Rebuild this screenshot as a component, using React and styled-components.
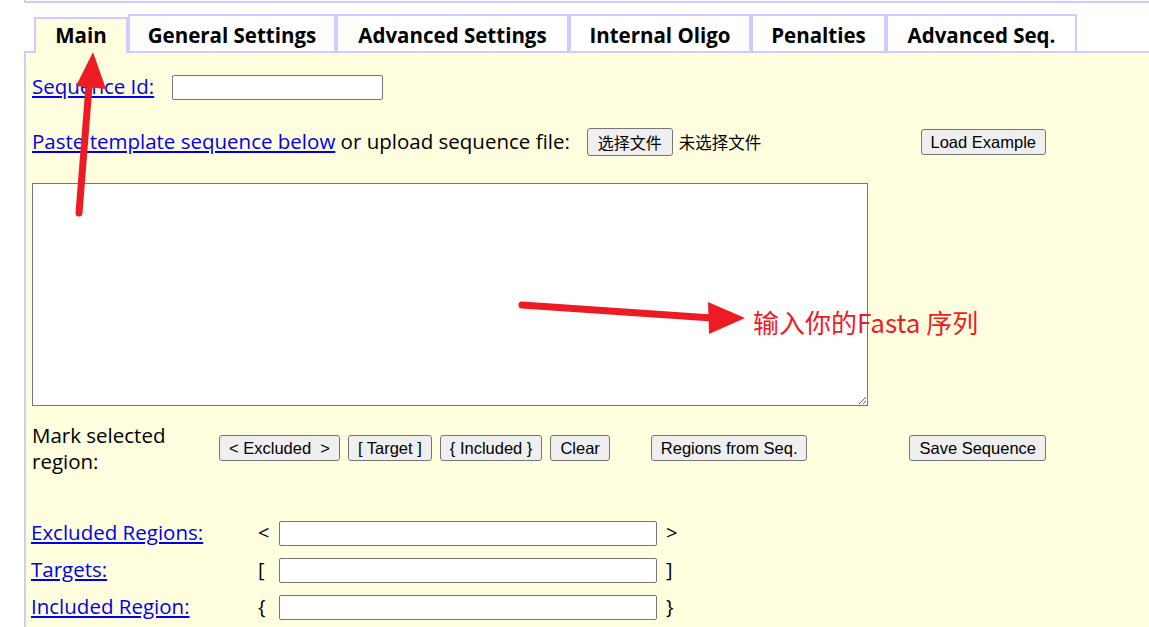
import styled, { createGlobalStyle } from "styled-components"

const GlobalStyle = createGlobalStyle`
    body {
        margin: 0;
        background: #ffffff;
        font-family: "Open Sans", "Noto Sans CJK SC", sans-serif;
        color: #000000;
    }
`

const tabs = [
    { name: "Main", width: 94 },
    { name: "General Settings", width: 208 },
    { name: "Advanced Settings", width: 233 },
    { name: "Internal Oligo", width: 182 },
    { name: "Penalties", width: 135 },
    { name: "Advanced Seq.", width: 191 },
]

const regions = [
    { label: "Excluded Regions:", open: "<", close: ">" },
    { label: "Targets:", open: "[", close: "]" },
    { label: "Included Region:", open: "{", close: "}" },
]

export default function App() {
    return (
        <Page>
            <GlobalStyle />
            <TopFrame />

            <TabBar>
                {tabs.map((t) => (
                    <Tab key={t.name} $width={t.width} $active={t.name === "Main"}>{t.name}</Tab>
                ))}
            </TabBar>

            <Panel>
                <Content>
                    <IdRow>
                        <FieldLink href="#">Sequence Id:</FieldLink>
                        <TextInput $width={211} />
                    </IdRow>

                    <UploadRow>
                        <UploadGroup>
                            <FieldLink href="#">Paste template sequence below</FieldLink>
                            <Plain>&nbsp;or upload sequence file:</Plain>
                            <FileButton>选择文件</FileButton>
                            <FileName>未选择文件</FileName>
                        </UploadGroup>
                        <Button>Load Example</Button>
                    </UploadRow>

                    <SeqArea />

                    <MarkRow>
                        <MarkLabel>Mark selected<br />region:</MarkLabel>
                        <ButtonGroup>
                            <Button>&lt; Excluded &nbsp;&gt;</Button>
                            <Button $gap={8}>[ Target ]</Button>
                            <Button $gap={8}>{"{ Included }"}</Button>
                            <Button $gap={8}>Clear</Button>
                            <Button $gap={41}>Regions from Seq.</Button>
                            <RightButton>Save Sequence</RightButton>
                        </ButtonGroup>
                    </MarkRow>

                    <RegionGrid>
                        {regions.map((r) => (
                            <RegionRow key={r.label}>
                                <FieldLink href="#">{r.label}</FieldLink>
                                <Bracket>{r.open}</Bracket>
                                <TextInput $width={378} />
                                <Bracket>{r.close}</Bracket>
                            </RegionRow>
                        ))}
                    </RegionGrid>
                </Content>
            </Panel>

            <Overlay width="1149" height="627" viewBox="0 0 1149 627">
                <line x1="79" y1="213" x2="89" y2="86" stroke="#ed1c24" strokeWidth="7" strokeLinecap="round" />
                <polygon points="93,52 76,86 106,89" fill="#ed1c24" />
                <line x1="522" y1="305" x2="712" y2="318" stroke="#ed1c24" strokeWidth="7" strokeLinecap="round" />
                <polygon points="745,318 708,302 709,334" fill="#ed1c24" />
            </Overlay>
            <Note>输入你的Fasta 序列</Note>
        </Page>
    )
}

const Page = styled.div`
    position: relative;
    width: 1149px;
    height: 627px;
    overflow: hidden;
`
const TopFrame = styled.div`
    margin-left: 24px;
    height: 1px;
    border-left: 2px solid #ccccff;
    border-bottom: 2px solid #ccccff;
`
const TabBar = styled.div`
    display: flex;
    align-items: flex-end;
    margin: 11px 0 0 24px;
    padding-left: 10px;
    border-bottom: 2px solid #ccccff;
`
const Tab = styled.div`
    position: relative;
    z-index: ${(p) => (p.$active ? 1 : 0)};
    box-sizing: border-box;
    width: ${(p) => p.$width}px;
    padding: ${(p) => (p.$active ? "4px 0 6px" : "7px 0 4px")};
    margin-bottom: ${(p) => (p.$active ? "-2px" : "0")};
    border: 2px solid #ccccff;
    border-bottom: none;
    background: ${(p) => (p.$active ? "#ffffe0" : "#ffffff")};
    font-size: 20.5px;
    font-weight: 700;
    line-height: 24px;
    text-align: center;
    white-space: nowrap;
`
const Panel = styled.div`
    margin-left: 24px;
    border-left: 2px solid #ccccff;
    background: #ffffe0;
    padding: 0 0 40px 6px;
`
const Content = styled.div`
    width: 1014px;
    display: flex;
    flex-direction: column;
`
const FieldLink = styled.a`
    margin-bottom: 3px;
    color: #0000ee;
    text-decoration: underline;
    font-size: 20.5px;
    line-height: 26px;
    white-space: nowrap;
`
const Plain = styled.span`
    margin-bottom: 3px;
    font-size: 20.5px;
    line-height: 26px;
    white-space: nowrap;
`
const TextInput = styled.input`
    box-sizing: border-box;
    width: ${(p) => p.$width}px;
    height: 25px;
    border: 1px solid #767676;
    border-radius: 2px;
    background: #ffffff;
    margin: 0;
`
const IdRow = styled.div`
    display: flex;
    align-items: center;
    gap: 18px;
    height: 25px;
    margin-top: 22px;
`
const UploadRow = styled.div`
    display: flex;
    align-items: center;
    justify-content: space-between;
    height: 28px;
    margin-top: 28px;
`
const UploadGroup = styled.div`
    display: flex;
    align-items: center;
`
const Button = styled.button`
    box-sizing: border-box;
    height: 26px;
    margin: 0 0 0 ${(p) => p.$gap || 0}px;
    padding: 0 9px;
    border: 1px solid #767676;
    border-radius: 3px;
    background: #efefef;
    color: #000000;
    font-family: "Liberation Sans", Arial, sans-serif;
    font-size: 16.5px;
    white-space: pre;
`
const RightButton = styled(Button)`
    margin-left: auto;
`
const FileButton = styled(Button)`
    height: 28px;
    margin-left: 17px;
    padding: 0 10px;
    font-family: "Noto Sans CJK SC", sans-serif;
    font-size: 16px;
`
const FileName = styled.span`
    margin-left: 6px;
    font-family: "Noto Sans CJK SC", sans-serif;
    font-size: 16.5px;
`
const SeqArea = styled.textarea`
    display: block;
    box-sizing: border-box;
    width: 836px;
    height: 223px;
    margin: 27px 0 0;
    border: 1px solid #767676;
    background: #ffffff;
    resize: both;
`
const MarkRow = styled.div`
    display: flex;
    align-items: flex-start;
    height: 52px;
    margin-top: 16px;
`
const MarkLabel = styled.div`
    width: 187px;
    font-size: 20.5px;
    line-height: 26px;
`
const ButtonGroup = styled.div`
    flex: 1;
    display: flex;
    align-items: center;
    margin-top: 13px;
`
const RegionGrid = styled.div`
    display: flex;
    flex-direction: column;
    gap: 12px;
    margin-top: 45px;
    margin-left: -1px;
`
const RegionRow = styled.div`
    display: grid;
    grid-template-columns: 227px 21px 378px auto;
    align-items: center;
    height: 25px;
`
const Bracket = styled.span`
    margin-bottom: 2px;
    font-size: 20px;
    line-height: 25px;
    &:last-child {
        padding-left: 9px;
    }
`
const Overlay = styled.svg`
    position: absolute;
    left: 0;
    top: 0;
    pointer-events: none;
`
const Note = styled.div`
    position: absolute;
    left: 753px;
    top: 304px;
    color: #ed1c24;
    font-family: "Noto Sans CJK SC", sans-serif;
    font-size: 26px;
    line-height: 36px;
    white-space: nowrap;
`
